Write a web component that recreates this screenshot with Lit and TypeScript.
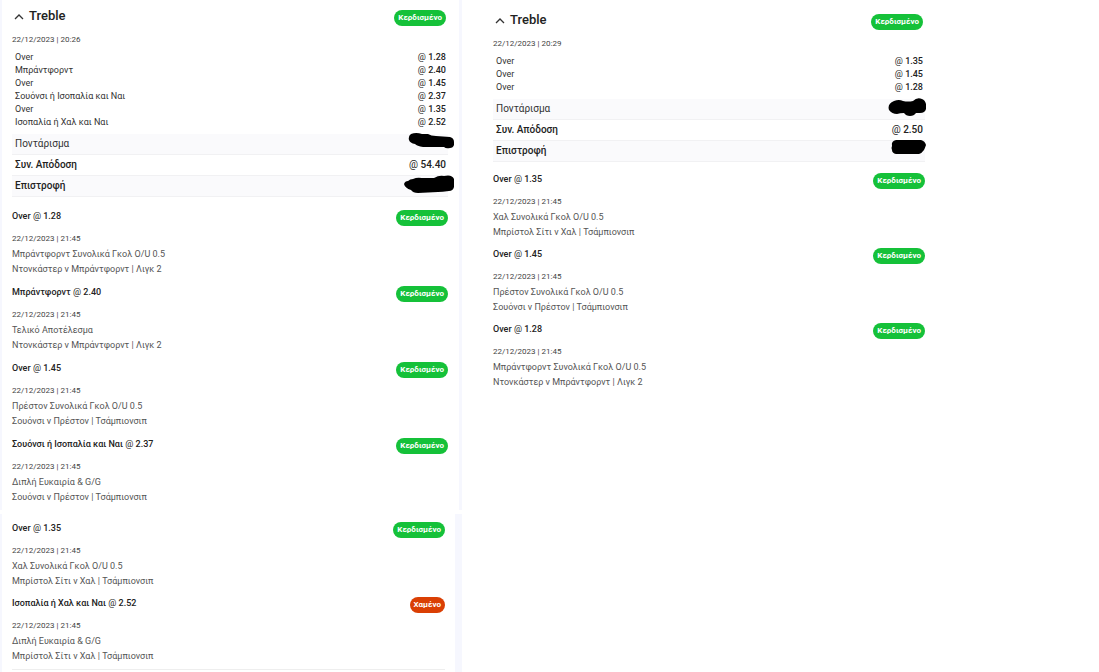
import { LitElement, html, css, nothing } from "lit";
import { customElement, property } from "lit/decorators.js";

interface Pick {
  name: string;
  odds: string;
}

interface Leg extends Pick {
  market: string;
  match: string;
  lost?: boolean;
}

interface Mark {
  w: number;
  h: number;
  d: string;
}

const KICKOFF = "22/12/2023 | 21:45";

const FIRST_PICKS: Pick[] = [
  { name: "Over", odds: "1.28" },
  { name: "Μπράντφορντ", odds: "2.40" },
  { name: "Over", odds: "1.45" },
  { name: "Σουόνσι ή Ισοπαλία και Ναι", odds: "2.37" },
  { name: "Over", odds: "1.35" },
  { name: "Ισοπαλία ή Χαλ και Ναι", odds: "2.52" },
];

const SECOND_PICKS: Pick[] = [
  { name: "Over", odds: "1.35" },
  { name: "Over", odds: "1.45" },
  { name: "Over", odds: "1.28" },
];

const hull: Leg = { name: "Over", odds: "1.35", market: "Χαλ Συνολικά Γκολ O/U 0.5", match: "Μπρίστολ Σίτι v Χαλ | Τσάμπιονσιπ" };
const preston: Leg = { name: "Over", odds: "1.45", market: "Πρέστον Συνολικά Γκολ O/U 0.5", match: "Σουόνσι v Πρέστον | Τσάμπιονσιπ" };
const bradford: Leg = { name: "Over", odds: "1.28", market: "Μπράντφορντ Συνολικά Γκολ O/U 0.5", match: "Ντονκάστερ v Μπράντφορντ | Λιγκ 2" };

const FIRST_LEGS: Leg[] = [
  bradford,
  { name: "Μπράντφορντ", odds: "2.40", market: "Τελικό Αποτέλεσμα", match: "Ντονκάστερ v Μπράντφορντ | Λιγκ 2" },
  preston,
  { name: "Σουόνσι ή Ισοπαλία και Ναι", odds: "2.37", market: "Διπλή Ευκαιρία & G/G", match: "Σουόνσι v Πρέστον | Τσάμπιονσιπ" },
];

const MORE_LEGS: Leg[] = [
  hull,
  { name: "Ισοπαλία ή Χαλ και Ναι", odds: "2.52", market: "Διπλή Ευκαιρία & G/G", match: "Μπρίστολ Σίτι v Χαλ | Τσάμπιονσιπ", lost: true },
];

const SECOND_LEGS: Leg[] = [hull, preston, bradford];

// Marker strokes covering the stake and the return of each slip
const STAKE_A: Mark = { w: 46, h: 16, d: "M3 1Q8 -1 14 1L20 1Q23 3 28 3L42 4Q46 5 46 9V12Q45 15 42 15Q38 16 36 14L15 14Q9 13 7 11Q2 10 1 7Q0 3 3 1Z" };
const RETURN_A: Mark = { w: 50, h: 18, d: "M9 4Q13 2 18 3L30 3Q35 0 40 1Q48 -1 50 4V12Q49 16 45 16Q38 17 34 17L14 18Q9 18 7 15Q1 13 0 9Q1 6 4 6Q6 4 9 4Z" };
const STAKE_B: Mark = { w: 38, h: 18, d: "M6 3Q11 1 15 3Q20 4 25 3Q29 -1 34 1Q37 2 38 6V11Q37 15 32 15H28Q26 18 22 18Q18 18 16 15Q12 15 9 16Q4 16 1 12Q-1 6 6 3Z" };
const RETURN_B: Mark = { w: 35, h: 14, d: "M5 0H30Q34 1 35 5Q34 8 33 10Q31 13 28 14H5Q1 13 1 10Q0 8 1 6Q0 1 5 0Z" };

@customElement("status-badge")
export class StatusBadge extends LitElement {
  @property({ type: Boolean }) lost = false;

  static styles = css`
    :host {
      display: block;
    }
    .badge {
      display: block;
      padding: 0 4px;
      border-radius: 8px;
      background: #15c139;
      color: #fff;
      font-size: 8px;
      font-weight: 700;
      line-height: 16px;
      white-space: nowrap;
    }
    .lost {
      background: #da3f04;
    }
  `;

  render() {
    return html`<span class="badge ${this.lost ? "lost" : ""}">${this.lost ? "Χαμένο" : "Κερδισμένο"}</span>`;
  }
}

@customElement("bet-legs")
export class BetLegs extends LitElement {
  @property({ attribute: false }) legs: Leg[] = [];

  static styles = css`
    :host {
      display: block;
    }
    .list {
      display: grid;
      gap: var(--leg-gap, 6px);
      margin: 0;
      padding: 0;
      list-style: none;
    }
    .head {
      display: flex;
      justify-content: space-between;
      align-items: flex-start;
      height: 16px;
      margin-bottom: 7px;
    }
    .pick {
      margin: 0;
      color: #222;
      font-size: 9px;
      font-weight: 500;
      line-height: 16px;
    }
    .at {
      font-weight: 400;
    }
    .badge {
      margin-top: 2px;
    }
    .date,
    .line {
      margin: 0;
      color: #444;
      font-size: 8px;
      line-height: 16px;
    }
    .line {
      color: #555;
      font-size: 9px;
      line-height: 15px;
    }
  `;

  render() {
    return html`<ul class="list">
      ${this.legs.map(
        (leg) => html`<li>
          <div class="head">
            <h3 class="pick">${leg.name} <span class="at">@</span> ${leg.odds}</h3>
            <status-badge class="badge" ?lost=${!!leg.lost}></status-badge>
          </div>
          <p class="date">${KICKOFF}</p>
          <p class="line">${leg.market}</p>
          <p class="line">${leg.match}</p>
        </li>`
      )}
    </ul>`;
  }
}

@customElement("bet-summary")
export class BetSummary extends LitElement {
  @property() date = "";
  @property() total = "";
  @property({ attribute: false }) picks: Pick[] = [];
  @property({ attribute: false }) stake?: Mark;
  @property({ attribute: false }) payout?: Mark;

  static styles = css`
    :host {
      display: block;
    }
    .head {
      display: flex;
      justify-content: space-between;
      align-items: center;
      padding-right: 2px;
    }
    .toggle {
      display: flex;
      align-items: center;
      gap: 5px;
      padding: 0 0 0 2px;
      border: 0;
      background: none;
      color: #222;
      font: 500 13px/16px Roboto, "Liberation Sans", sans-serif;
      cursor: pointer;
    }
    .badge {
      margin-top: 4px;
    }
    .date {
      margin: 0;
      padding: 8px 0 5px;
      color: #444;
      font-size: 8px;
      line-height: 12px;
    }
    .table {
      width: 100%;
      border-collapse: collapse;
    }
    .table th,
    .table td {
      height: 13px;
      padding: 0 2px 0 3px;
      color: #333;
      font-size: 9px;
      font-weight: 400;
      line-height: 13px;
      text-align: left;
    }
    .table td {
      color: #222;
      font-weight: 500;
      text-align: right;
    }
    .table .at {
      font-weight: 400;
    }
    .totals {
      margin-top: 5px;
    }
    .totals th,
    .totals td {
      height: 20px;
      border-bottom: 1px solid #f1f1f3;
      font-size: 10px;
      line-height: 20px;
    }
    .totals td {
      position: relative;
    }
    .totals .strong {
      color: #222;
      font-weight: 500;
    }
    .shade {
      background: #fafafc;
    }
    .mark {
      position: absolute;
      top: -1px;
      right: var(--mark-right, -1px);
      fill: #000;
    }
  `;

  private mark(m?: Mark) {
    if (!m) return nothing;
    return html`<svg class="mark" width=${m.w} height=${m.h} viewBox="0 0 ${m.w} ${m.h}" aria-hidden="true"><path d=${m.d}></path></svg>`;
  }

  render() {
    return html`
      <div class="head">
        <button class="toggle" type="button" aria-expanded="true">
          <svg width="10" height="8" viewBox="0 0 10 8" fill="none" stroke="#333" stroke-width="1.3" aria-hidden="true"><path d="M1 7 5 3 9 7"></path></svg>
          Treble
        </button>
        <status-badge class="badge"></status-badge>
      </div>
      <p class="date">${this.date}</p>
      <table class="table">
        ${this.picks.map((p) => html`<tr><th scope="row">${p.name}</th><td><span class="at">@</span> ${p.odds}</td></tr>`)}
      </table>
      <table class="table totals">
        <tr class="shade"><th scope="row">Ποντάρισμα</th><td>${this.mark(this.stake)}</td></tr>
        <tr><th scope="row" class="strong">Συν. Απόδοση</th><td><span class="at">@</span> ${this.total}</td></tr>
        <tr class="shade"><th scope="row" class="strong">Επιστροφή</th><td>${this.mark(this.payout)}</td></tr>
      </table>
    `;
  }
}

@customElement("app-root")
export class AppRoot extends LitElement {
  static styles = css`
    :host {
      display: block;
      min-height: 100vh;
      background: #fff;
      font-family: Roboto, "Liberation Sans", sans-serif;
    }
    .page {
      display: grid;
      grid-template-columns: 462fr 463fr 174fr;
    }
    .panel {
      --mark-right: -6px;
      padding: 6px 11px 5px 10px;
      border: solid #f6f7fe;
      border-width: 0 3px 0 2px;
    }
    .first-legs {
      --leg-gap: 7px;
      margin-top: 11px;
    }
    .more {
      margin-top: 4px;
      padding: 6px 10px 2px 10px;
      border-right-width: 7px;
    }
    .ruled {
      padding-bottom: 5px;
      border-bottom: 1px solid #eee;
    }
    .second {
      padding: 10px 0 0 31px;
    }
    .second-legs {
      margin-top: 9px;
    }
  `;

  render() {
    return html`<main class="page">
      <div>
        <section class="panel">
          <bet-summary date="22/12/2023 | 20:26" total="54.40" .picks=${FIRST_PICKS} .stake=${STAKE_A} .payout=${RETURN_A}></bet-summary>
          <bet-legs class="first-legs" .legs=${FIRST_LEGS}></bet-legs>
        </section>
        <section class="panel more">
          <bet-legs class="ruled" .legs=${MORE_LEGS}></bet-legs>
        </section>
      </div>
      <section class="second">
        <bet-summary date="22/12/2023 | 20:29" total="2.50" .picks=${SECOND_PICKS} .stake=${STAKE_B} .payout=${RETURN_B}></bet-summary>
        <bet-legs class="second-legs" .legs=${SECOND_LEGS}></bet-legs>
      </section>
    </main>`;
  }
}
